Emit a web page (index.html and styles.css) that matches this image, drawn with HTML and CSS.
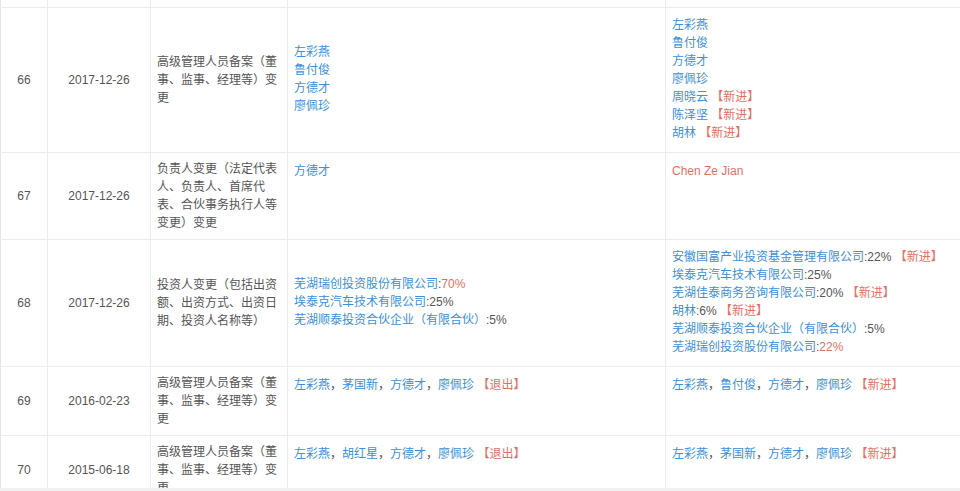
FILE: index.html
```html
<!DOCTYPE html>
<html lang="zh-CN">
<head>
<meta charset="utf-8">
<title>变更记录</title>
<link rel="stylesheet" href="styles.css">
</head>
<body>
<div class="frame">
<table class="log">
  <colgroup>
    <col class="c-no"><col class="c-date"><col class="c-type"><col class="c-before"><col class="c-after">
  </colgroup>
  <tbody>
    <tr class="r-prev"><td></td><td></td><td></td><td></td><td></td></tr>
    <tr class="r66">
      <td class="no">66</td>
      <td class="date">2017-12-26</td>
      <td class="type">高级管理人员备案（董事、监事、经理等）变更</td>
      <td class="list">
        <div class="ln"><a class="nm">左彩燕</a></div>
        <div class="ln"><a class="nm">鲁付俊</a></div>
        <div class="ln"><a class="nm">方德才</a></div>
        <div class="ln"><a class="nm">廖佩珍</a></div>
      </td>
      <td class="list">
        <div class="ln"><a class="nm">左彩燕</a></div>
        <div class="ln"><a class="nm">鲁付俊</a></div>
        <div class="ln"><a class="nm">方德才</a></div>
        <div class="ln"><a class="nm">廖佩珍</a></div>
        <div class="ln"><a class="nm">周晓云</a> <span class="tag">【新进】</span></div>
        <div class="ln"><a class="nm">陈泽坚</a> <span class="tag">【新进】</span></div>
        <div class="ln"><a class="nm">胡林</a> <span class="tag">【新进】</span></div>
      </td>
    </tr>
    <tr class="r67">
      <td class="no">67</td>
      <td class="date">2017-12-26</td>
      <td class="type">负责人变更（法定代表人、负责人、首席代表、合伙事务执行人等变更）变更</td>
      <td class="top"><a class="nm">方德才</a></td>
      <td class="top"><span class="red">Chen Ze Jian</span></td>
    </tr>
    <tr class="r68">
      <td class="no">68</td>
      <td class="date">2017-12-26</td>
      <td class="type">投资人变更（包括出资额、出资方式、出资日期、投资人名称等）</td>
      <td class="list">
        <div class="ln"><a class="nm">芜湖瑞创投资股份有限公司</a><span class="pct">:</span><span class="red">70%</span></div>
        <div class="ln"><a class="nm">埃泰克汽车技术有限公司</a><span class="pct">:25%</span></div>
        <div class="ln"><a class="nm">芜湖顺泰投资合伙企业（有限合伙）</a><span class="pct">:5%</span></div>
      </td>
      <td class="list">
        <div class="ln"><a class="nm">安徽国富产业投资基金管理有限公司</a><span class="pct">:22%</span> <span class="tag">【新进】</span></div>
        <div class="ln"><a class="nm">埃泰克汽车技术有限公司</a><span class="pct">:25%</span></div>
        <div class="ln"><a class="nm">芜湖佳泰商务咨询有限公司</a><span class="pct">:20%</span> <span class="tag">【新进】</span></div>
        <div class="ln"><a class="nm">胡林</a><span class="pct">:6%</span> <span class="tag">【新进】</span></div>
        <div class="ln"><a class="nm">芜湖顺泰投资合伙企业（有限合伙）</a><span class="pct">:5%</span></div>
        <div class="ln"><a class="nm">芜湖瑞创投资股份有限公司</a><span class="pct">:</span><span class="red">22%</span></div>
      </td>
    </tr>
    <tr class="r69">
      <td class="no">69</td>
      <td class="date">2016-02-23</td>
      <td class="type">高级管理人员备案（董事、监事、经理等）变更</td>
      <td class="top"><a class="nm">左彩燕</a><span class="sep">，</span><a class="nm">茅国新</a><span class="sep">，</span><a class="nm">方德才</a><span class="sep">，</span><a class="nm">廖佩珍</a> <span class="tag">【退出】</span></td>
      <td class="top"><a class="nm">左彩燕</a><span class="sep">，</span><a class="nm">鲁付俊</a><span class="sep">，</span><a class="nm">方德才</a><span class="sep">，</span><a class="nm">廖佩珍</a> <span class="tag">【新进】</span></td>
    </tr>
    <tr class="r70">
      <td class="no">70</td>
      <td class="date">2015-06-18</td>
      <td class="type">高级管理人员备案（董事、监事、经理等）变更</td>
      <td class="top"><a class="nm">左彩燕</a><span class="sep">，</span><a class="nm">胡红星</a><span class="sep">，</span><a class="nm">方德才</a><span class="sep">，</span><a class="nm">廖佩珍</a> <span class="tag">【退出】</span></td>
      <td class="top"><a class="nm">左彩燕</a><span class="sep">，</span><a class="nm">茅国新</a><span class="sep">，</span><a class="nm">方德才</a><span class="sep">，</span><a class="nm">廖佩珍</a> <span class="tag">【新进】</span></td>
    </tr>
  </tbody>
</table>
</div>
</body>
</html>
```

FILE: styles.css
```css
html, body {
  margin: 0;
  padding: 0;
  background: #f1f1f1;
}
body {
  width: 960px;
  height: 491px;
  overflow: hidden;
  font-family: "Liberation Sans", "Noto Sans CJK SC", sans-serif;
  font-size: 12px;
  line-height: 18px;
  color: #555;
}
.frame {
  height: 488px;
  overflow: hidden;
  background: #fff;
}
.log {
  width: 960px;
  table-layout: fixed;
  border-collapse: collapse;
}
.c-no { width: 47px; }
.c-date { width: 103px; }
.c-type { width: 137px; }
.c-before { width: 378px; }
.c-after { width: 295px; }

.log td {
  border: 1px solid #ececec;
  padding: 7px 8px 7px 6px;
  vertical-align: middle;
  word-break: break-all;
}
.log tr td:first-child { border-left-color: #e4e4e4; }
.log tr td:last-child { border-right: none; }

.r-prev td { height: 7px; padding: 0; border-top: none; }
.r66 { height: 144px; }
.r67 { height: 84px; }
.r68 { height: 125px; }
.r69 { height: 67px; }
.r70 { height: 67px; }

.log td.no { text-align: center; padding: 0; }
.log td.date { text-align: center; padding: 0 4px; }
.log td.type { color: #555; }
.log td.list { padding: 8px 8px 10px 6px; }
.log td.top { vertical-align: top; padding-top: 9px; }

.ln { white-space: nowrap; }
.nm { color: #3b8fdb; text-decoration: none; }
.pct { color: #555; }
.sep { color: #555; }
.red { color: #e36f62; }
.tag { color: #e36f62; }
```
